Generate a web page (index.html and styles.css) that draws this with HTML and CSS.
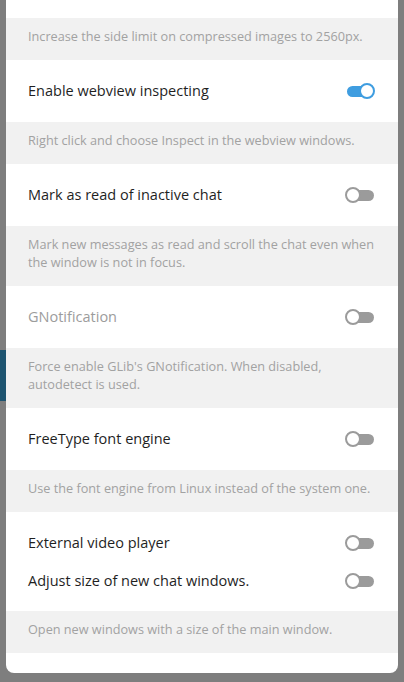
FILE: index.html
```html
<!DOCTYPE html>
<html>
<head>
<title>Experimental settings</title>
<link rel="stylesheet" href="styles.css">
</head>
<body>

<div class="backdrop">
  <div class="under-blue"></div>

  <div class="modal">
    <div class="spacer-top"></div>
    <div class="desc">Increase the side limit on compressed images to 2560px.</div>

    <div class="row">
      <div class="option">
        <span class="title">Enable webview inspecting</span>
        <span class="toggle on"></span>
      </div>
    </div>
    <div class="desc">Right click and choose Inspect in the webview windows.</div>

    <div class="row">
      <div class="option">
        <span class="title">Mark as read of inactive chat</span>
        <span class="toggle"></span>
      </div>
    </div>
    <div class="desc">Mark new messages as read and scroll the chat even when the window is not in focus.</div>

    <div class="row">
      <div class="option">
        <span class="title disabled">GNotification</span>
        <span class="toggle"></span>
      </div>
    </div>
    <div class="desc">Force enable GLib's GNotification. When disabled, autodetect is used.</div>

    <div class="row">
      <div class="option">
        <span class="title">FreeType font engine</span>
        <span class="toggle"></span>
      </div>
    </div>
    <div class="desc">Use the font engine from Linux instead of the system one.</div>

    <div class="row group">
      <div class="option">
        <span class="title">External video player</span>
        <span class="toggle"></span>
      </div>
      <div class="option">
        <span class="title">Adjust size of new chat windows.</span>
        <span class="toggle"></span>
      </div>
    </div>
    <div class="desc">Open new windows with a size of the main window.</div>

    <div class="spacer-bottom"></div>
  </div>
</div>

</body>
</html>
```

FILE: styles.css
```css
body { margin: 0; background-color: #7e7e7e; font-family: 'Open Sans', 'Noto Sans', sans-serif; overflow: hidden; }

/* dimmed page behind the box */
.backdrop { position: relative; height: 682px; padding: 0 6px; box-sizing: border-box; }
.under-blue { position: absolute; left: 0; top: 350px; width: 6px; height: 51px; background-color: #1d5470; }

.modal { position: relative; background-color: #fff; border-radius: 0 0 8px 8px; overflow: hidden; }
.spacer-top { height: 18px; }
.spacer-bottom { height: 20px; }

.row { padding: 21px 22px 21px 22px; }
.row.group { display: flex; flex-direction: column; gap: 18px; padding: 21px 22px 20px 22px; }
.option { display: flex; align-items: center; justify-content: space-between; height: 20px; }
.title { font-size: 14.5px; line-height: 20px; color: #1f1f1f; }
.title.disabled { color: #9c9c9c; }

.desc { background-color: #f1f1f1; color: #a2a2a2; font-size: 12.7px; line-height: 18px; padding: 9px 14px 15px 22px; }

/* switch */
.toggle { position: relative; width: 30px; height: 16px; margin-right: 1px; }
.toggle::before { content: ""; position: absolute; left: 2px; right: 1px; top: 3px; height: 11px; border-radius: 6px; background-color: #9b9b9b; }
.toggle::after { content: ""; position: absolute; left: 0; top: 0; width: 12px; height: 12px; border: 2px solid #9b9b9b; border-radius: 50%; background-color: #fff; }
.toggle.on::before { background-color: #3f9de0; }
.toggle.on::after { left: auto; right: 0; border-color: #3f9de0; }
```
